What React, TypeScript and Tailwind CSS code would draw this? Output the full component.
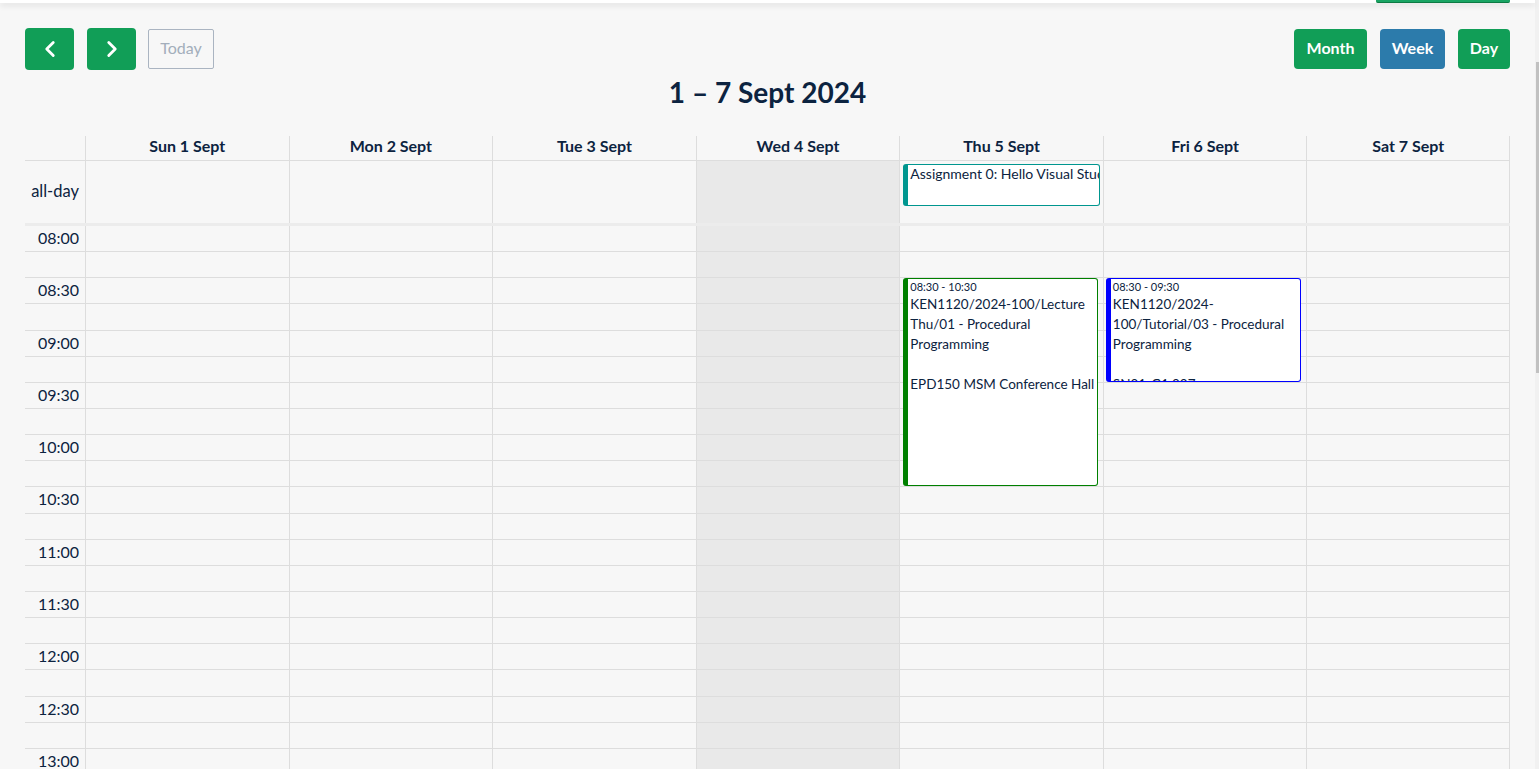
import React from "react";
import { ChevronLeft, ChevronRight } from "lucide-react";

const days = [
  "Sun 1 Sept",
  "Mon 2 Sept",
  "Tue 3 Sept",
  "Wed 4 Sept",
  "Thu 5 Sept",
  "Fri 6 Sept",
  "Sat 7 Sept",
];

const times = [
  "08:00", "08:30", "09:00", "09:30", "10:00", "10:30", "11:00", "11:30",
  "12:00", "12:30", "13:00", "13:30", "14:00",
];

const font = { fontFamily: "Lato, 'Noto Sans', sans-serif" };

function Row({ label }: { label?: string }) {
  return (
    <div className="grid grid-cols-[60px_repeat(7,minmax(0,1fr))] h-[26.15px]">
      <div className="border-b border-[#dddddd] flex items-center justify-end pr-[6px] text-[16px] text-[#0c2340] leading-none pb-[1px]">
        {label}
      </div>
      {days.map((d, i) => (
        <div
          key={d}
          className={
            "border-b border-l border-[#dddddd] " +
            (i === 3 ? "bg-[#e9e9e9] " : "") +
            (i === 6 ? "border-r" : "")
          }
        />
      ))}
    </div>
  );
}

export default function App() {
  const rows: (string | undefined)[] = [];
  times.forEach((t) => {
    rows.push(t);
    rows.push(undefined);
  });

  return (
    <div className="h-screen w-full overflow-hidden bg-[#f7f7f7] flex" style={font}>
      <div className="flex-1 flex flex-col min-w-0">
        <div className="h-[3px] bg-white shadow-[0_2px_6px_rgba(0,0,0,0.14)] relative z-10 flex justify-end pr-[25px]">
          <div className="w-[134px] h-[3px] bg-[#19a463] border-b border-[#0c7a43] rounded-b-[2px]" />
        </div>
        <div className="px-[25px] flex flex-col">
          <div className="mt-[25px] flex items-center justify-between">
            <div className="flex items-center gap-[13px]">
              <button className="w-[49px] h-[42px] rounded-[4px] bg-[#119e57] flex items-center justify-center text-white">
                <ChevronLeft size={26} strokeWidth={2.6} />
              </button>
              <button className="w-[49px] h-[42px] rounded-[4px] bg-[#119e57] flex items-center justify-center text-white">
                <ChevronRight size={26} strokeWidth={2.6} />
              </button>
              <button className="ml-[-1px] w-[66px] h-[40px] rounded-[2px] border border-[#aab4c1] text-[#a3aebb] text-[16px] leading-none flex items-center justify-center pb-[3px]">
                Today
              </button>
            </div>
            <div className="flex items-center gap-[13px]">
              <button className="w-[73px] h-[40px] rounded-[4px] bg-[#119e57] text-white font-bold text-[16px] leading-none flex items-center justify-center pb-[2px]">
                Month
              </button>
              <button className="w-[65px] h-[40px] rounded-[4px] bg-[#2c7bab] text-white font-bold text-[16px] leading-none flex items-center justify-center pb-[2px]">
                Week
              </button>
              <button className="w-[52px] h-[40px] rounded-[4px] bg-[#119e57] text-white font-bold text-[16px] leading-none flex items-center justify-center pb-[2px]">
                Day
              </button>
            </div>
          </div>
          <h1 className="mt-[5px] text-center text-[28px] leading-[34px] font-bold text-[#0c2340]">
            1 – 7 Sept 2024
          </h1>

          <div className="mt-[27px] flex flex-col">
            {/* header */}
            <div className="grid grid-cols-[60px_repeat(7,minmax(0,1fr))] h-[25px]">
              <div className="border-b border-[#dddddd]" />
              {days.map((d, i) => (
                <div
                  key={d}
                  className={
                    "border-b border-l border-[#dddddd] flex justify-center text-[16px] leading-[20px] font-bold text-[#0c2340] " +
                    (i === 6 ? "border-r" : "")
                  }
                >
                  {d}
                </div>
              ))}
            </div>
            {/* all-day */}
            <div className="grid grid-cols-[60px_repeat(7,minmax(0,1fr))] h-[62px]">
              <div className="flex items-center justify-end pr-[6px] text-[16.5px] text-[#0c2340] pb-[2px]">
                all-day
              </div>
              {days.map((d, i) => (
                <div
                  key={d}
                  className={
                    "border-l border-[#dddddd] " +
                    (i === 3 ? "bg-[#e9e9e9] " : "") +
                    (i === 6 ? "border-r " : "") +
                    (i === 4 ? "pt-[3px] pl-[3px] pr-[3px]" : "")
                  }
                >
                  {i === 4 && (
                    <div className="h-[42px] bg-white border border-l-[5px] border-[#00968f] rounded-[3px] overflow-hidden pl-[2px]">
                      <div className="whitespace-nowrap text-[14px] leading-[18px] text-[#0c2340]">
                        Assignment 0: Hello Visual Studio
                      </div>
                    </div>
                  )}
                </div>
              ))}
            </div>
            <div className="h-[3px] bg-[#ececec]" />
            {/* time grid */}
            <div className="relative">
              {rows.map((r, idx) => (
                <Row key={idx} label={r} />
              ))}
              <div className="absolute inset-0 grid grid-cols-[60px_repeat(7,minmax(0,1fr))] pointer-events-none">
                <div />
                <div />
                <div />
                <div />
                <div />
                <div className="relative">
                  <div className="absolute top-[52.3px] left-[4px] right-[5px] h-[208px] bg-white border border-l-[5px] border-[#008000] rounded-[3px] overflow-hidden pl-[2px] pt-[1px] text-[#0c2340]">
                    <div className="text-[11px] leading-[14px]">08:30 - 10:30</div>
                    <div className="text-[13.5px] leading-[20px]">
                      KEN1120/2024-100/Lecture Thu/01 - Procedural Programming
                    </div>
                    <div className="h-[20px]" />
                    <div className="text-[13.5px] leading-[20px] whitespace-nowrap">EPD150 MSM Conference Hall</div>
                  </div>
                </div>
                <div className="relative">
                  <div className="absolute top-[52.3px] left-[3px] right-[5px] h-[104px] bg-white border border-l-[5px] border-[#0000ff] rounded-[3px] overflow-hidden pl-[2px] pt-[1px] text-[#0c2340]">
                    <div className="text-[11px] leading-[14px]">08:30 - 09:30</div>
                    <div className="text-[13.5px] leading-[20px] whitespace-nowrap">KEN1120/2024-</div>
                    <div className="text-[13.5px] leading-[20px] whitespace-nowrap">100/Tutorial/03 - Procedural</div>
                    <div className="text-[13.5px] leading-[20px] whitespace-nowrap">Programming</div>
                    <div className="h-[20px]" />
                    <div className="text-[13.5px] leading-[20px] whitespace-nowrap">SN01-G1.007</div>
                  </div>
                </div>
                <div />
              </div>
            </div>
          </div>
        </div>
      </div>
      <div className="w-[4px] bg-[#f1f1f1] flex flex-col items-end">
        <div className="h-[62px]" />
        <div className="w-[3px] h-[311px] bg-[#c1c1c1]" />
      </div>
    </div>
  );
}
